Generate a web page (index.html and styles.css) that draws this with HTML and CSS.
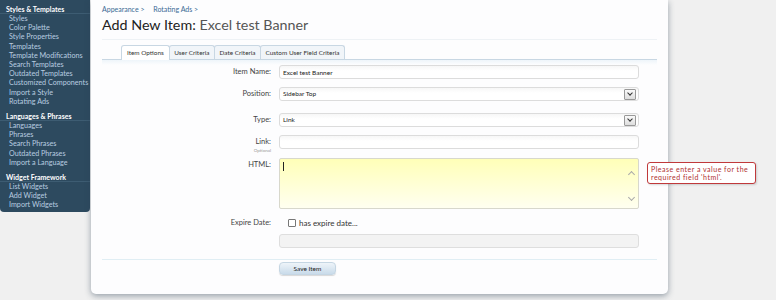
FILE: index.html
```html
<!DOCTYPE html>
<html lang="en">
<head>
    <meta charset="UTF-8">
    <meta name="viewport" content="width=device-width, initial-scale=1.0">
    <title>Add New Item</title>
    <link rel="stylesheet" href="styles.css">
</head>
<body>
    <div class="page">
        <!-- Side navigation -->
        <nav class="sidebar">
            <div class="nav-section">
                <h3>Styles &amp; Templates</h3>
                <a href="#">Styles</a>
                <a href="#">Color Palette</a>
                <a href="#">Style Properties</a>
                <a href="#">Templates</a>
                <a href="#">Template Modifications</a>
                <a href="#">Search Templates</a>
                <a href="#">Outdated Templates</a>
                <a href="#">Customized Components</a>
                <a href="#">Import a Style</a>
                <a href="#">Rotating Ads</a>
            </div>
            <div class="nav-section">
                <h3>Languages &amp; Phrases</h3>
                <a href="#">Languages</a>
                <a href="#">Phrases</a>
                <a href="#">Search Phrases</a>
                <a href="#">Outdated Phrases</a>
                <a href="#">Import a Language</a>
            </div>
            <div class="nav-section">
                <h3>Widget Framework</h3>
                <a href="#">List Widgets</a>
                <a href="#">Add Widget</a>
                <a href="#">Import Widgets</a>
            </div>
        </nav>

        <!-- Main panel -->
        <main class="panel">
            <div class="breadcrumb">
                <a href="#">Appearance &gt;</a>
                <a href="#">Rotating Ads &gt;</a>
            </div>
            <h1 class="title">Add New Item: <span>Excel test Banner</span></h1>

            <ul class="tabs">
                <li class="active">Item Options</li>
                <li>User Criteria</li>
                <li>Date Criteria</li>
                <li>Custom User Field Criteria</li>
            </ul>

            <form class="item-form">
                <div class="row name-row">
                    <label for="item-name">Item Name:</label>
                    <input type="text" id="item-name" class="field" value="Excel test Banner">
                </div>
                <div class="row position-row">
                    <label>Position:</label>
                    <div class="field select">Sidebar Top<span class="arrow"></span></div>
                </div>
                <div class="row type-row">
                    <label>Type:</label>
                    <div class="field select">Link<span class="arrow"></span></div>
                </div>
                <div class="row link-row">
                    <label for="item-link">Link:<small>Optional</small></label>
                    <input type="text" id="item-link" class="field">
                </div>
                <div class="row">
                    <label>HTML:</label>
                    <div class="textarea">
                        <span class="caret"></span>
                        <span class="scroll up"></span>
                        <span class="scroll down"></span>
                        <div class="error-tip">Please enter a value for the<br>required field 'html'.</div>
                    </div>
                </div>
                <div class="row expire">
                    <label>Expire Date:</label>
                    <div class="expire-box">
                        <div class="check"><span class="box"></span>has expire date...</div>
                        <div class="field disabled"></div>
                    </div>
                </div>
                <div class="submit-row">
                    <button type="button">Save Item</button>
                </div>
            </form>
        </main>
    </div>
</body>
</html>
```

FILE: styles.css
```css
body { margin: 0; background: #f0f0f0; font-family: Lato, "Open Sans", sans-serif; color: #333; overflow: hidden; }
.page { display: flex; align-items: flex-start; width: 776px; height: 300px; }

.sidebar { width: 90px; flex-shrink: 0; background: #2d4a5f; border-radius: 0 0 4px 4px; padding: 5px 0 2px; box-sizing: border-box; }
.nav-section { padding: 0 0 6px; }
.nav-section:last-child { padding-bottom: 0; }
.nav-section h3 { margin: 0; padding: 0 6px; font-size: 7px; font-weight: bold; color: #fff; line-height: 8px; border-bottom: 1px solid #3d5c72; }
.nav-section a { display: block; padding-left: 9px; font-size: 7.2px; line-height: 9.2px; color: #b9cde0; text-decoration: none; white-space: nowrap; }

.panel { position: relative; width: 577px; height: 294px; margin-left: 1px; background: #fdfdfe; border-radius: 0 0 5px 5px; box-shadow: 0 2px 6px rgba(40, 60, 80, 0.45); padding: 0 11px; box-sizing: border-box; }
.breadcrumb { padding-top: 5px; font-size: 7px; line-height: 8px; }
.breadcrumb a { color: #3a6a95; text-decoration: none; margin-right: 7px; }
.title { margin: 3px 0 0; padding-bottom: 5px; font-size: 14.3px; font-weight: normal; line-height: 18px; color: #222; border-bottom: 1px solid #eef2f5; }
.title span { color: #555; }

.tabs { display: flex; list-style: none; margin: 5px 0 0; padding: 0 0 0 19px; border-bottom: 1px solid #c8d7e3; height: 14px; }
.tabs li { font-size: 6.4px; line-height: 13px; padding: 0 4.5px; margin-right: -1px; background: #f1f5f9; border: 1px solid #c8d7e3; border-bottom: none; border-radius: 3px 3px 0 0; color: #333; }
.tabs li.active { background: #fff; height: 14px; padding: 0 5px; }

.item-form { padding-top: 5px; background: linear-gradient(#eef5fa, #fdfdfe 5px); }
.row { display: flex; align-items: flex-start; }
.row label { width: 169px; margin-right: 8px; flex-shrink: 0; text-align: right; font-size: 7.5px; line-height: 14px; color: #444; }
.row label small { display: block; font-size: 4.5px; line-height: 4px; color: #999; }
.name-row { margin-bottom: 8px; }
.position-row { margin-bottom: 12px; }
.type-row { margin-bottom: 8px; }
.link-row { margin-bottom: 5px; }
.field { width: 360px; height: 14px; box-sizing: border-box; border: 1px solid #dcdcdc; border-radius: 3px; background: linear-gradient(#f7f7f7, #fff 5px); font-family: inherit; font-size: 6.5px; color: #222; padding: 0 3px; margin: 0; line-height: 12px; }
.select { position: relative; }
.arrow { position: absolute; right: 2px; top: 1px; width: 10px; height: 9px; border: 1px solid #999; background: linear-gradient(#fafafa, #ddd); border-radius: 1px; }
.arrow::after { content: ""; position: absolute; left: 3px; top: 1px; width: 3px; height: 3px; border-right: 1.3px solid #333; border-bottom: 1.3px solid #333; transform: rotate(45deg); }

.textarea { position: relative; width: 360px; height: 51px; box-sizing: border-box; border: 1px solid #d8d8cc; border-radius: 2px; background: linear-gradient(#ffffb8, #fffff0); }
.caret { position: absolute; left: 3px; top: 3px; width: 1px; height: 9px; background: #222; }
.scroll { position: absolute; right: 4px; width: 4px; height: 4px; border-left: 1px solid #aaa; border-top: 1px solid #aaa; }
.scroll.up { top: 13px; transform: rotate(45deg); }
.scroll.down { top: 36px; transform: rotate(225deg); }
.error-tip { position: absolute; left: 367px; top: 3px; width: 101px; padding: 2px 3px; background: #fff; border: 1px solid #c0393b; border-radius: 3px; font-size: 7px; letter-spacing: 0.5px; line-height: 8px; color: #b03030; white-space: nowrap; box-shadow: 1px 1px 2px rgba(0, 0, 0, 0.15); }

.row.expire { margin-top: 9px; margin-bottom: 11px; }
.row.expire label { line-height: 10px; }
.expire-box { display: flex; flex-direction: column; gap: 6px; }
.check { display: flex; align-items: center; padding-left: 9px; font-size: 8px; line-height: 10px; color: #333; }
.check .box { width: 8px; height: 8px; box-sizing: border-box; border: 1px solid #777; border-radius: 1px; background: #fff; margin-right: 3px; }
.field.disabled { height: 14px; background: #f3f3f3; border-color: #dedede; }

.submit-row { display: flex; border-top: 1px solid #e0eef4; padding: 2px 0 0 177px; }
.submit-row button { width: 57px; height: 13px; padding: 0; border: 1px solid #c5d6e3; border-radius: 4px; background: linear-gradient(#eef4f9, #c9dbea); font-family: inherit; font-size: 6.5px; color: #222; box-shadow: 0 1px 1px rgba(0, 0, 0, 0.15); }
```
